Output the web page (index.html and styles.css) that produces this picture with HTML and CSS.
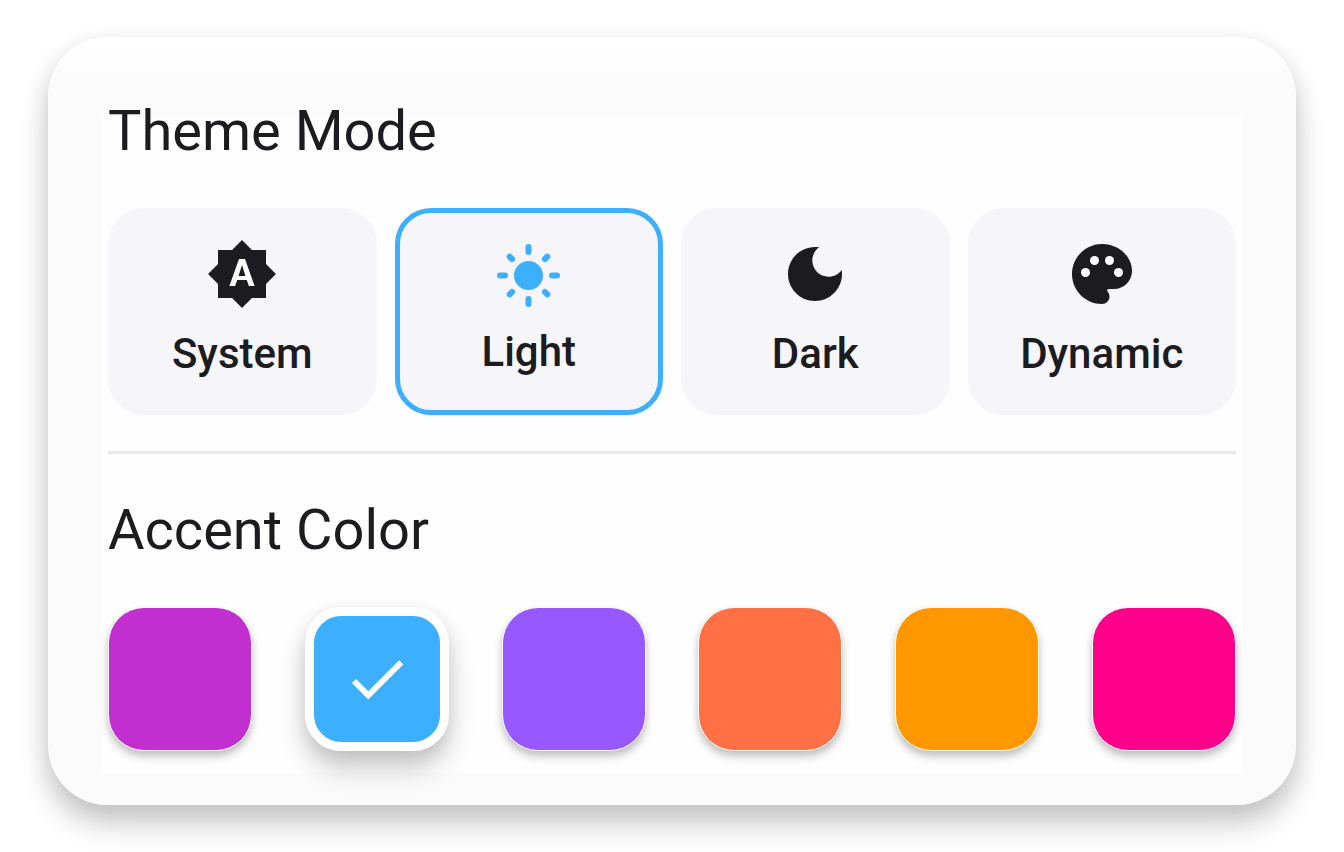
FILE: index.html
```
<!DOCTYPE html>
<html lang="en">
<head>
<meta charset="utf-8">
<meta name="viewport" content="width=device-width, initial-scale=1">
<title>Theme settings</title>
<link rel="stylesheet" href="styles.css">
</head>
<body>
<main class="card">
  <section class="section" aria-labelledby="mode-title">
    <h2 class="title" id="mode-title">Theme Mode</h2>
    <div class="modes" role="radiogroup" aria-labelledby="mode-title">
      <label class="mode">
        <input class="mode-input" type="radio" name="mode" value="system">
        <svg class="icon" viewBox="0 0 24 24" aria-hidden="true">
          <path class="icon-hole" d="M7 7h10v10H7z"/>
          <path d="M10.85 12.65h2.3L12 9l-1.15 3.65zM20 8.69V4h-4.69L12 .69 8.69 4H4v4.69L.69 12 4 15.31V20h4.69L12 23.31 15.31 20H20v-4.69L23.31 12 20 8.69zM14.3 16l-.7-2h-3.2l-.7 2H7.8L11 7h2l3.2 9h-1.9z"/>
        </svg>
        <span class="mode-name">System</span>
      </label>
      <label class="mode mode-selected">
        <input class="mode-input" type="radio" name="mode" value="light" checked>
        <svg class="icon" viewBox="0 0 72 72" aria-hidden="true">
          <circle cx="35.500" cy="37.500" r="14.500"/>
          <path class="rays" d="M35.500 9v5M35.500 61v5M7 37.500h5M59 37.500h5M16.700 18.700l2.400 2.400M54.300 18.700l-2.400 2.400M16.700 56.300l2.400-2.400M54.300 56.300l-2.400-2.400"/>
        </svg>
        <span class="mode-name">Light</span>
      </label>
      <label class="mode">
        <input class="mode-input" type="radio" name="mode" value="dark">
        <svg class="icon" viewBox="0 0 24 24" aria-hidden="true">
          <path d="M12 3c-4.970 0-9 4.030-9 9s4.030 9 9 9 9-4.030 9-9c0-.46-.04-.92-.1-1.36-.98 1.370-2.580 2.260-4.400 2.260-2.980 0-5.400-2.420-5.400-5.400 0-1.810.89-3.420 2.260-4.400-.44-.06-.9-.1-1.360-.1z"/>
        </svg>
        <span class="mode-name">Dark</span>
      </label>
      <label class="mode">
        <input class="mode-input" type="radio" name="mode" value="dynamic">
        <svg class="icon" viewBox="0 0 24 24" aria-hidden="true">
          <path d="M12 2C6.490 2 2 6.490 2 12s4.490 10 10 10c1.380 0 2.500-1.120 2.500-2.500 0-.61-.23-1.200-.64-1.670-.08-.1-.13-.21-.13-.33 0-.28.22-.5.5-.5H16c3.310 0 6-2.690 6-6 0-4.960-4.490-9-10-9z"/>
          <g class="icon-hole">
            <circle cx="6.500" cy="11.500" r="1.500"/>
            <circle cx="9.500" cy="7.500" r="1.500"/>
            <circle cx="14.500" cy="7.500" r="1.500"/>
            <circle cx="17.500" cy="11.500" r="1.500"/>
          </g>
        </svg>
        <span class="mode-name">Dynamic</span>
      </label>
    </div>
  </section>
  <hr class="divider">
  <section class="section" aria-labelledby="accent-title">
    <h2 class="title" id="accent-title">Accent Color</h2>
    <div class="swatches" role="radiogroup" aria-labelledby="accent-title">
      <input class="swatch swatch-purple" type="radio" name="accent" aria-label="Purple">
      <label class="swatch-current">
        <input class="swatch swatch-blue" type="radio" name="accent" aria-label="Blue" checked>
        <svg class="check" viewBox="0 0 24 24" aria-hidden="true"><path d="M9 16.170 4.830 12l-1.420 1.410L9 19 21 7l-1.410-1.410z"/></svg>
      </label>
      <input class="swatch swatch-violet" type="radio" name="accent" aria-label="Violet">
      <input class="swatch swatch-coral" type="radio" name="accent" aria-label="Coral">
      <input class="swatch swatch-orange" type="radio" name="accent" aria-label="Orange">
      <input class="swatch swatch-pink" type="radio" name="accent" aria-label="Pink">
    </div>
  </section>
</main>
</body>
</html>
```
FILE: styles.css
```
* {
  box-sizing: border-box;
}

body {
  margin: 0;
  padding: 37px 48px 47px;
  background: #fff;
  color: #1c1b20;
  font-family: Roboto, "Liberation Sans", sans-serif;
}

.card {
  position: relative;
  padding: 61px 60px 54px;
  border-radius: 60px;
  background: linear-gradient(#fff, #fbfbfb 60px);
  box-shadow: 0 20px 30px rgba(0, 0, 0, 0.18), 0 6px 24px rgba(0, 0, 0, 0.1);
}

/* lighter surface behind the settings */
.card::before {
  content: "";
  position: absolute;
  inset: 80px 53px 32px;
  background: #fefefe;
}

.section {
  position: relative;
  display: flex;
  flex-direction: column;
  gap: 44px;
}

.title {
  margin: 0;
  font-size: 56px;
  line-height: 66px;
  font-weight: 400;
}

.modes {
  display: grid;
  grid-template-columns: repeat(4, 1fr);
  gap: 18px;
}

.mode {
  position: relative;
  display: flex;
  flex-direction: column;
  align-items: center;
  gap: 20px;
  padding: 25px 5px 32px;
  border: 5px solid #f6f5fa;
  border-radius: 36px;
  background: #f6f5fa;
  cursor: pointer;
}

.mode-selected {
  gap: 18px;
  border-color: #3cafff;
}

.mode-input {
  position: absolute;
  inset: 0;
  margin: 0;
  opacity: 0;
  cursor: pointer;
}

.mode-name {
  font-size: 42px;
  line-height: 48px;
  font-weight: 500;
}

.icon {
  width: 72px;
  height: 72px;
  fill: #1c1b20;
}

.icon-hole {
  fill: #fff;
}

.mode-selected .icon {
  fill: #3cafff;
}

.rays {
  fill: none;
  stroke: #3cafff;
  stroke-width: 6px;
  stroke-linecap: round;
}

.divider {
  position: relative;
  height: 3px;
  margin: 36px 0 43px;
  border: 0;
  background: #e8e8e8;
}

.swatches {
  display: flex;
  justify-content: space-between;
}

.swatch {
  appearance: none;
  display: block;
  width: 144px;
  height: 144px;
  margin: 0;
  border: 1px solid #fff;
  border-radius: 36px;
  box-shadow: 0 6px 9px rgba(0, 0, 0, 0.2), 0 2px 6px rgba(0, 0, 0, 0.08);
  cursor: pointer;
}

.swatch:checked {
  border-width: 9px;
  box-shadow: 0 18px 27px rgba(0, 0, 0, 0.2), 0 4px 18px rgba(0, 0, 0, 0.08);
}

.swatch-current {
  display: grid;
  place-items: center;
}

.swatch-current > * {
  grid-area: 1 / 1;
}

.check {
  width: 70px;
  height: 70px;
  fill: #fff;
  pointer-events: none;
}

.swatch-purple { background-color: #c12fd1; }
.swatch-blue { background-color: #3cafff; }
.swatch-violet { background-color: #9858ff; }
.swatch-coral { background-color: #ff7144; }
.swatch-orange { background-color: #ff9800; }
.swatch-pink { background-color: #ff008a; }
```
